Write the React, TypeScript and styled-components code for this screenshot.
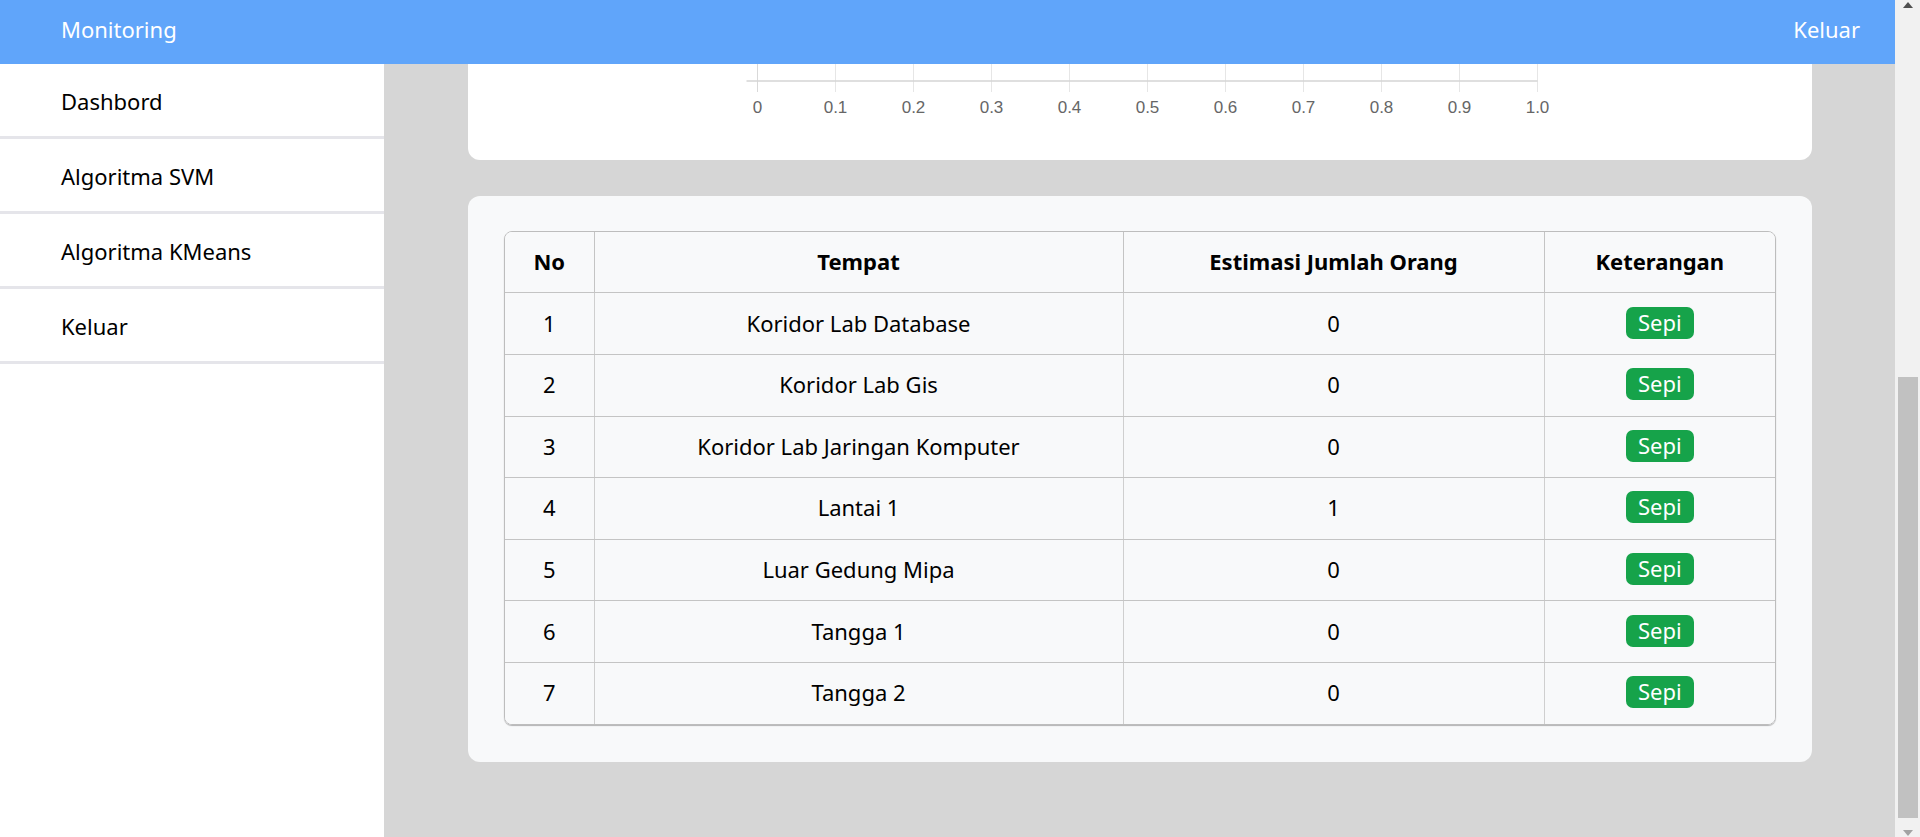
import React from "react";
import styled, { createGlobalStyle } from "styled-components";

const GlobalStyle = createGlobalStyle`
  html, body {
    margin: 0;
    padding: 0;
    height: 100%;
    overflow: hidden;
  }
  #root {
    height: 100%;
  }
  * {
    box-sizing: border-box;
  }
`;

const places: { name: string; count: number }[] = [
  { name: "Koridor Lab Database", count: 0 },
  { name: "Koridor Lab Gis", count: 0 },
  { name: "Koridor Lab Jaringan Komputer", count: 0 },
  { name: "Lantai 1", count: 1 },
  { name: "Luar Gedung Mipa", count: 0 },
  { name: "Tangga 1", count: 0 },
  { name: "Tangga 2", count: 0 },
];

const menu = ["Dashbord", "Algoritma SVM", "Algoritma KMeans", "Keluar"];

const Root = styled.div`
  display: flex;
  width: 100vw;
  height: 100vh;
  font-family: "Noto Sans", "Open Sans", sans-serif;
`;

const Shell = styled.div`
  flex: 1;
  min-width: 0;
  display: flex;
  flex-direction: column;
`;

const Header = styled.header`
  height: 64px;
  flex-shrink: 0;
  background: #60a5fa;
  color: #ffffff;
  display: flex;
  align-items: center;
  justify-content: space-between;
  padding: 0 35px 7px 61px;
  font-size: 22px;
`;

const Brand = styled.span`
  letter-spacing: 0;
`;

const HeaderLink = styled.span`
  cursor: pointer;
`;

const Body = styled.div`
  flex: 1;
  min-height: 0;
  display: flex;
`;

const Sidebar = styled.nav`
  width: 384px;
  flex-shrink: 0;
  background: #ffffff;
  display: flex;
  flex-direction: column;
`;

const NavItem = styled.div`
  height: 75px;
  border-bottom: 3px solid #e5e5ea;
  display: flex;
  align-items: center;
  padding: 2px 0 0 61px;
  font-size: 22px;
  color: #000000;
`;

const Main = styled.main`
  flex: 1;
  min-width: 0;
  background: #d6d6d6;
  overflow: hidden;
  display: flex;
  flex-direction: column;
  justify-content: flex-end;
  gap: 36px;
  padding: 0 83px 75px 84px;
`;

const ChartCard = styled.section`
  flex-shrink: 0;
  background: #ffffff;
  border-radius: 12px;
  overflow: hidden;

  svg {
    display: block;
  }
`;

const TableCard = styled.section`
  flex-shrink: 0;
  background: #f8f9fa;
  border-radius: 12px;
  padding: 35px 36px 37px 36px;
`;

const TableFrame = styled.div`
  border: 1px solid #bdbdbd;
  border-radius: 8px;
  overflow: hidden;
  box-shadow: 0 1px 1px rgba(0, 0, 0, 0.28);
`;

const Table = styled.table`
  width: 100%;
  border-collapse: collapse;
  table-layout: fixed;
  font-size: 22px;
  color: #000000;
  background: #f8f9fa;
`;

const HeadCell = styled.th<{ $w: number }>`
  width: ${(p) => p.$w}px;
  height: 61px;
  padding: 0 0 2px;
  font-weight: 700;
  text-align: center;
  border-bottom: 1px solid #c4c4c4;
  border-right: 1px solid #c4c4c4;
  &:last-child {
    border-right: none;
  }
`;

const Cell = styled.td`
  height: 61.6px;
  padding: 0 0 2px;
  text-align: center;
  vertical-align: middle;
  border-bottom: 1px solid #c4c4c4;
  border-right: 1px solid #cfcfcf;
  &:last-child {
    border-right: none;
  }
  tr:last-child > & {
    border-bottom: none;
  }
`;

const Badge = styled.span`
  display: inline-block;
  height: 32px;
  line-height: 31px;
  padding: 0 12px;
  border-radius: 7px;
  background: #16a34a;
  color: #ffffff;
  font-size: 22px;
`;

const ScrollBar = styled.div`
  width: 25px;
  flex-shrink: 0;
  background: #f1f1f1;
  display: flex;
  flex-direction: column;
`;

const ScrollButton = styled.div<{ $down?: boolean }>`
  height: 17px;
  display: flex;
  justify-content: center;
  align-items: ${(p) => (p.$down ? "flex-end" : "flex-start")};
  padding: ${(p) => (p.$down ? "0 0 1px" : "2px 0 0")};

  &::before {
    content: "";
    width: 0;
    height: 0;
    border-left: 5.5px solid transparent;
    border-right: 5.5px solid transparent;
    ${(p) =>
      p.$down
        ? "border-top: 6px solid #a3a3a3;"
        : "border-bottom: 6px solid #505050;"}
  }
`;

const ScrollTrack = styled.div`
  flex: 1;
  display: flex;
  flex-direction: column;
  justify-content: flex-end;
  padding: 0 2px 2px 3px;
`;

const ScrollThumb = styled.div`
  height: 441px;
  background: #c1c1c1;
`;

const CHART_W = 1344;
const BAND = 80;
const TOP = 24;
const CHART_H = TOP + BAND * places.length + 78.5;
const AXIS_Y = CHART_H - 78.5;
const X0 = 289.5;
const STEP = 78;

function PlaceChart() {
  const ticks = Array.from({ length: 11 }, (_, i) => i);
  return (
    <svg width={CHART_W} height={CHART_H} viewBox={`0 0 ${CHART_W} ${CHART_H}`}>
      {ticks.map((i) => (
        <line
          key={`g${i}`}
          x1={X0 + i * STEP}
          x2={X0 + i * STEP}
          y1={TOP}
          y2={AXIS_Y + 11}
          stroke={i === 0 ? "#d9d9d9" : "#e6e6e6"}
          strokeWidth={1}
        />
      ))}
      {places.map((p, i) => (
        <line
          key={`h${i}`}
          x1={X0 - 11}
          x2={X0}
          y1={TOP + BAND * i}
          y2={TOP + BAND * i}
          stroke="#e6e6e6"
        />
      ))}
      <line x1={X0 - 11} x2={X0 + 10 * STEP} y1={AXIS_Y} y2={AXIS_Y} stroke="#d4d4d4" strokeWidth={1.6} />
      {places.map((p, i) =>
        p.count > 0 ? (
          <rect
            key={p.name}
            x={X0}
            y={TOP + BAND * i + BAND * 0.2}
            width={p.count * 10 * STEP}
            height={BAND * 0.6}
            fill="rgba(96,165,250,0.45)"
            stroke="#60a5fa"
            strokeWidth={1.5}
          />
        ) : null
      )}
      {ticks.map((i) => (
        <text
          key={`t${i}`}
          x={X0 + i * STEP}
          y={AXIS_Y + 32}
          textAnchor="middle"
          fill="#666666"
          fontSize={17}
          fontFamily="'Liberation Sans', Arial, sans-serif"
        >
          {i === 0 ? "0" : (i / 10).toFixed(1)}
        </text>
      ))}
    </svg>
  );
}

const columns = [
  { label: "No", w: 89 },
  { label: "Tempat", w: 529 },
  { label: "Estimasi Jumlah Orang", w: 421 },
  { label: "Keterangan", w: 231 },
];

export default function App() {
  return (
    <>
      <GlobalStyle />
      <Root>
        <Shell>
          <Header>
            <Brand>Monitoring</Brand>
            <HeaderLink>Keluar</HeaderLink>
          </Header>
          <Body>
            <Sidebar>
              {menu.map((m) => (
                <NavItem key={m}>{m}</NavItem>
              ))}
            </Sidebar>
            <Main>
              <ChartCard>
                <PlaceChart />
              </ChartCard>
              <TableCard>
                <TableFrame>
                  <Table>
                    <thead>
                      <tr>
                        {columns.map((c) => (
                          <HeadCell key={c.label} $w={c.w}>
                            {c.label}
                          </HeadCell>
                        ))}
                      </tr>
                    </thead>
                    <tbody>
                      {places.map((p, i) => (
                        <tr key={p.name}>
                          <Cell>{i + 1}</Cell>
                          <Cell>{p.name}</Cell>
                          <Cell>{p.count}</Cell>
                          <Cell>
                            <Badge>Sepi</Badge>
                          </Cell>
                        </tr>
                      ))}
                    </tbody>
                  </Table>
                </TableFrame>
              </TableCard>
            </Main>
          </Body>
        </Shell>
        <ScrollBar>
          <ScrollButton />
          <ScrollTrack>
            <ScrollThumb />
          </ScrollTrack>
          <ScrollButton $down />
        </ScrollBar>
      </Root>
    </>
  );
}
